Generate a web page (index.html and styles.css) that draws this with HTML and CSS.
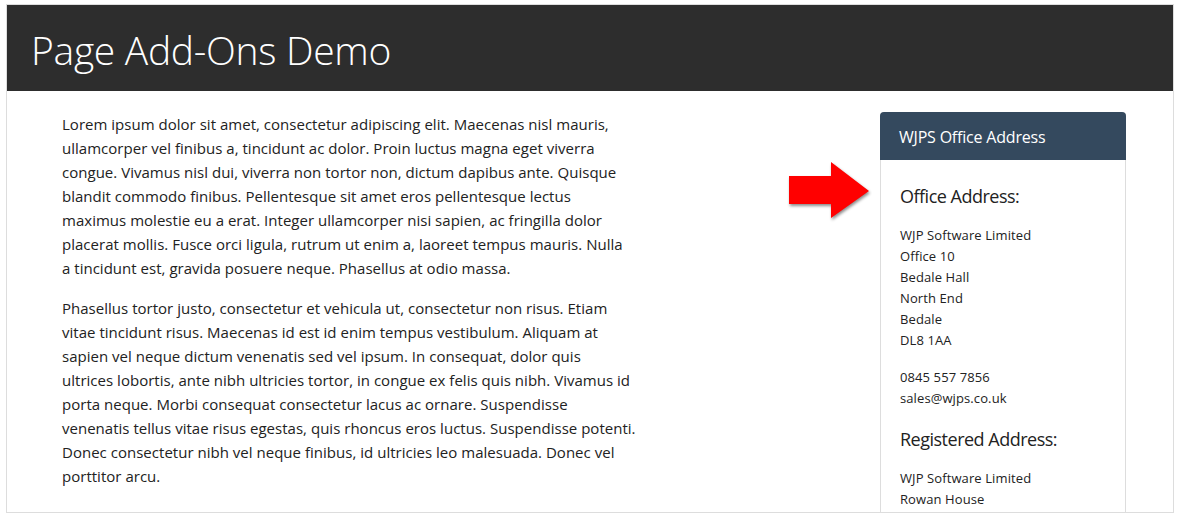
FILE: index.html
```html
<!DOCTYPE html>
<html lang="en">
<head>
<meta charset="utf-8">
<title>Page Add-Ons Demo</title>
<link rel="stylesheet" href="styles.css">
</head>
<body>
<div class="frame">
  <header class="banner">
    <h1 class="title">Page Add-Ons Demo</h1>
  </header>
  <main class="content">
    <section class="article">
      <p>Lorem ipsum dolor sit amet, consectetur adipiscing elit. Maecenas nisl mauris,<br>
      ullamcorper vel finibus a, tincidunt ac dolor. Proin luctus magna eget viverra<br>
      congue. Vivamus nisl dui, viverra non tortor non, dictum dapibus ante. Quisque<br>
      blandit commodo finibus. Pellentesque sit amet eros pellentesque lectus<br>
      maximus molestie eu a erat. Integer ullamcorper nisi sapien, ac fringilla dolor<br>
      placerat mollis. Fusce orci ligula, rutrum ut enim a, laoreet tempus mauris. Nulla<br>
      a tincidunt est, gravida posuere neque. Phasellus at odio massa.</p>
      <p>Phasellus tortor justo, consectetur et vehicula ut, consectetur non risus. Etiam<br>
      vitae tincidunt risus. Maecenas id est id enim tempus vestibulum. Aliquam at<br>
      sapien vel neque dictum venenatis sed vel ipsum. In consequat, dolor quis<br>
      ultrices lobortis, ante nibh ultricies tortor, in congue ex felis quis nibh. Vivamus id<br>
      porta neque. Morbi consequat consectetur lacus ac ornare. Suspendisse<br>
      venenatis tellus vitae risus egestas, quis rhoncus eros luctus. Suspendisse potenti.<br>
      Donec consectetur nibh vel neque finibus, id ultricies leo malesuada. Donec vel<br>
      porttitor arcu.</p>
    </section>
    <aside class="sidebar">
      <svg class="arrow" width="82" height="58" viewBox="0 0 82 58" aria-hidden="true">
        <polygon points="0,14 42,14 42,0 80,29 42,56 42,42 0,42" fill="#ff0000"/>
      </svg>
      <div class="panel">
        <div class="panel-head">WJPS Office Address</div>
        <div class="panel-body">
          <h4 class="panel-title">Office Address:</h4>
          <p>WJP Software Limited<br>Office 10<br>Bedale Hall<br>North End<br>Bedale<br>DL8 1AA</p>
          <p>0845 557 7856<br>sales@wjps.co.uk</p>
          <h4 class="panel-title second">Registered Address:</h4>
          <p>WJP Software Limited<br>Rowan House</p>
        </div>
      </div>
    </aside>
  </main>
</div>
</body>
</html>
```
FILE: styles.css
```css
html, body {
  margin: 0;
  padding: 0;
  background: #ffffff;
}
body {
  font-family: "Open Sans", "Noto Sans", "Liberation Sans", sans-serif;
  color: #222222;
}
.frame {
  box-sizing: border-box;
  width: 1168px;
  height: 509px;
  margin: 4px 0 0 6px;
  border: 1px solid #dddddd;
  overflow: hidden;
}
.banner {
  height: 86px;
  background: #2d2d2d;
  display: flex;
  align-items: center;
  padding-left: 24px;
}
.title {
  margin: 0;
  font-weight: 300;
  font-size: 39px;
  line-height: 1;
  color: #ffffff;
  padding-top: 2px;
  letter-spacing: -0.3px;
}
.content {
  display: flex;
  justify-content: space-between;
  align-items: flex-start;
  padding: 21px 47px 0 55px;
}
.article {
  flex: 0 0 600px;
  font-size: 15px;
  line-height: 24px;
  letter-spacing: 0.02px;
}
.article p {
  margin: 0 0 16px;
}
.sidebar {
  display: flex;
  align-items: flex-start;
  gap: 9px;
}
.arrow {
  margin-top: 50px;
  filter: drop-shadow(1px 2px 1.5px rgba(0, 0, 0, 0.45));
}
.panel {
  width: 246px;
  box-sizing: border-box;
  border: 1px solid #dddddd;
  border-radius: 4px 4px 0 0;
  min-height: 480px;
}
.panel-head {
  background: #34495e;
  color: #ffffff;
  height: 48px;
  line-height: 50px;
  padding: 0 19px;
  font-size: 16px;
  letter-spacing: -0.2px;
  margin: -1px -1px 0;
  border-radius: 4px 4px 0 0;
}
.panel-body {
  padding: 25px 19px 20px;
  font-size: 13px;
  line-height: 21px;
  letter-spacing: 0.1px;
  color: #222222;
}
.panel-title {
  margin: 0 0 18px;
  font-size: 18px;
  font-weight: 400;
  line-height: 22px;
  letter-spacing: -0.5px;
}
.panel-title.second {
  margin-top: 19px;
}
.panel-body p {
  margin: 0 0 16px;
}
```
